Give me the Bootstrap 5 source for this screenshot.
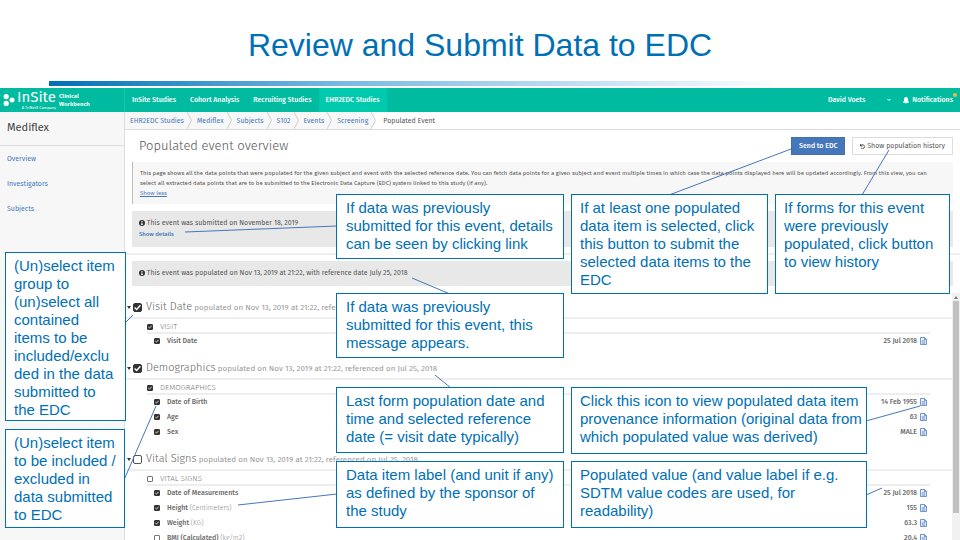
<!DOCTYPE html>
<html lang="en">
<head>
<meta charset="utf-8">
<meta name="viewport" content="width=device-width, initial-scale=1">
<title>Review and Submit Data to EDC</title>
<link href="https://cdn.jsdelivr.net/npm/bootstrap@5.3.0/dist/css/bootstrap.min.css" rel="stylesheet">
<style>
  :root { --ink: #0070b4; --link: #4677bb; --teal: #00bb9f; --rule: #eeeeee; }
  body { font-family: "Fira Sans", "Noto Sans", sans-serif; font-size: 7px; line-height: 10px; color: #555; background: #fff; }
  a { color: var(--link); text-decoration: none; }
  .slide { height: 100vh; }
  .slide-head { height: 88px; padding-top: 26px; }
  .slide-head h1 { font: 32px/38px "Liberation Sans", Arial, sans-serif; color: var(--ink); text-align: center; margin: 0 0 17px; }
  .fade-bar { height: 5px; margin-left: 49px; width: 77%; background: linear-gradient(90deg, #0070b4, #79bae4 40%, #c9e2f4 75%, #fff); }
  .topbar { height: 24px; background: var(--teal); color: #fff; font-weight: 500; }
  .topbar a, .topbar button { color: #fff; }
  .brand-cell { width: 125px; border-right: 1px solid #1fc4ab; padding-left: 3px; }
  .brand-words { margin: 0 3px 0 2px; }
  .brand-name { font-size: 15px; line-height: 15px; font-weight: 400; }
  .brand-sub { font-size: 4px; line-height: 5px; font-weight: 400; }
  .brand-tag { font-size: 6px; line-height: 8px; font-weight: 600; }
  .main-nav .nav-link { padding: 0 7px; line-height: 24px; }
  .main-nav .nav-link.active { background: #00caad; }
  .user-btn { background: none; border: 0; padding: 0; font-weight: 500; line-height: 24px; }
  .user-btn svg { margin-left: 22px; }
  .user-side { padding-right: 7px; }
  .bell { margin-right: 3px; }
  .alert-dot { width: 4px; height: 4px; border-radius: 50%; background: #ffb14a; top: -2px; right: -4px; }
  .side { width: 125px; background: #f7f7f7; border-right: 1px solid #ddd; }
  .side h2 { font-size: 11px; line-height: 32px; height: 34px; margin: 0; padding-left: 7px; border-bottom: 1px solid #ddd; color: #444; font-weight: 400; }
  .side .nav-link { padding: 0 7px; line-height: 25px; color: var(--link); }
  .crumbs { height: 18px; border-bottom: 1px solid #ddd; line-height: 17px; }
  .crumbs ol { margin: 0; padding: 0; list-style: none; }
  .crumbs li { background: #f7f7f7; padding-left: 5px; }
  .crumbs li:last-child { background: #fff; padding-left: 7px; }
  .crumbs svg { width: 5px; height: 17px; margin-left: 3px; display: block; }
  .page-title { height: 32px; padding: 0 7px 0 14px; }
  .page-title h3 { font-size: 13px; line-height: 20px; font-weight: 300; color: #555; margin: 0; }
  .act { font-size: 7px; line-height: 16px; border-radius: 0; padding: 0 7px; border: 1px solid #ddd; color: #555; background: #fff; }
  .act-main { background: var(--link); border-color: #426fae; color: #fff; font-weight: 500; margin-right: 7px; }
  .notes { padding: 0 7px; }
  .intro { background: #f7f7f7; border-left: 1px solid #bbb; padding: 6px 7px; height: 42px; font-size: 6px; }
  .notice { background: #e8e8e8; padding: 7px; }
  .notice svg { width: 6px; height: 6px; }
  .notice-sub { height: 36px; margin-top: 7px; }
  .notice-sub a { display: block; font-size: 6px; line-height: 12px; font-weight: 500; }
  .notice-pop { height: 25px; }
  .split { height: 2px; background: #eee; margin: 6px 0; }
  .forms { margin-top: 7px; }
  .group { margin-bottom: 10px; }
  .group-head { height: 22px; border-bottom: 2px solid var(--rule); padding-left: 2px; color: #999; font-size: 8px; }
  .group-head b { font-size: 11px; font-weight: 300; color: #666; }
  .caret-tri { border: 2px solid transparent; border-top: 3px solid #333; border-bottom: 0; margin-right: 2px; }
  .sub-block { margin-left: 22px; margin-right: 22px; }
  .sub-head { height: 15px; border-bottom: 2px solid var(--rule); padding-top: 2px; font-size: 8px; }
  .sub-head label { color: #777; font-weight: 300; margin-left: 7px; }
  .item { height: 14px; padding-left: 7px; padding-right: 3px; font-weight: 500; color: #6a6a6a; }
  .item + .item { height: 15px; }
  .item label { margin-left: 7px; }
  .item small { font-size: 7px; color: #888; font-weight: 300; }
  .item svg { width: 7px; height: 8px; margin-left: 3px; }
  input.tick { appearance: none; width: 6px; height: 6px; margin: 0; border: 1px solid #777; border-radius: 1px; background: #fff center/100% no-repeat; flex: none; }
  input.tick-lg { width: 9px; height: 9px; border-radius: 2px; margin-right: 4px; border-color: #555; }
  input.tick:checked { background-color: #333; border-color: #333; background-image: url("data:image/svg+xml,%3Csvg xmlns='http://www.w3.org/2000/svg' viewBox='0 0 8 8'%3E%3Cpath d='M.7 4l2.300 2.200 4.300-4.800' fill='none' stroke='%23fff' stroke-width='1.6'/%3E%3C/svg%3E"); }
  .scroller { width: 8px; background: #f1f1f1; }
  .scroller-arrow { height: 8px; }
  .scroller-thumb { height: 212px; width: 6px; background: #c1c1c1; }
  .callout { position: absolute; background: #fff; border: 1px solid var(--ink); color: var(--ink); font: 15px/18px "Liberation Sans", Arial, sans-serif; padding: 4px 9px; white-space: nowrap; margin: 0; }
  .callout-slim { padding: 4px 8px; }
  .leaders { position: absolute; left: 0; top: 0; width: 960px; height: 540px; fill: none; stroke: #4677bb; stroke-width: 1; pointer-events: none; }
</style>
<script src="https://cdn.jsdelivr.net/npm/bootstrap@5.3.0/dist/js/bootstrap.bundle.min.js"></script>
</head>
<body>
<svg class="d-none" aria-hidden="true">
  <symbol id="i-doc" viewBox="0 0 14 16"><path d="M1 1h8l4 4v10H1z M9 1v4h4" fill="#eaf1fa" stroke="#4677bb" stroke-width="1.5"/><path d="M3.5 7.5h7M3.5 10h7M3.5 12.5h7" stroke="#4677bb" stroke-width="1.2"/></symbol>
  <symbol id="i-info" viewBox="0 0 12 12"><circle cx="6" cy="6" r="6" fill="#333"/><path d="M5 2h2v2H5zM4.3 5H7v3.5h.8V10H4.300V8.500H5v-2h-.7z" fill="#fff"/></symbol>
  <symbol id="i-sep" viewBox="0 0 5 17"><path d="M0 0l4.500 8.500L0 17" fill="none" stroke="#ccc"/></symbol>
  <symbol id="i-sep-last" viewBox="0 0 5 17"><path d="M0 0l4.500 8.500L0 17H5V0z" fill="#fff"/><path d="M0 0l4.500 8.500L0 17" fill="none" stroke="#ccc"/></symbol>
</svg>
<div class="slide d-flex flex-column position-relative overflow-hidden">
  <header class="slide-head flex-shrink-0">
    <h1>Review and Submit Data to EDC</h1>
    <div class="fade-bar"></div>
  </header>

  <div class="topbar d-flex align-items-center flex-shrink-0">
    <a href="#" class="brand-cell d-flex align-items-center h-100 flex-shrink-0">
      <svg width="12" height="12" viewBox="0 0 12 12" fill="#fff" aria-hidden="true"><circle cx="3.200" cy="2.600" r="2.600"/><circle cx="9" cy="6" r="2.500"/><circle cx="3.200" cy="9.400" r="2.600"/></svg>
      <span class="brand-words d-flex flex-column text-end"><span class="brand-name">InSite</span><span class="brand-sub">A TriNetX Company</span></span>
      <span class="brand-tag">Clinical<br>Workbench</span>
    </a>
    <nav class="nav main-nav flex-nowrap">
      <a class="nav-link" href="#">InSite Studies</a>
      <a class="nav-link" href="#">Cohort Analysis</a>
      <a class="nav-link" href="#">Recruiting Studies</a>
      <a class="nav-link active" href="#">EHR2EDC Studies</a>
    </nav>
    <div class="user-side d-flex align-items-center ms-auto">
      <button type="button" class="user-btn d-flex align-items-center">David Voets
        <svg width="4" height="4" viewBox="0 0 8 8" fill="none" stroke="#fff" stroke-width="2" aria-hidden="true"><path d="M1 2l3 3 3-3"/></svg></button>
      <a href="#" class="position-relative d-flex align-items-center ms-2 ps-1"><svg class="bell" width="6" height="7" viewBox="0 0 12 14" fill="#fff" aria-hidden="true"><path d="M6 0c-3 0-4 2.500-4 5 0 3-.7 4-2 5.500V11.500h12V10.500C10.700 9 10 8 10 5c0-2.500-1-5-4-5zM4.300 12a1.800 1.800 0 0 0 3.400 0z"/></svg>Notifications<span class="alert-dot position-absolute"></span></a>
    </div>
  </div>

  <div class="d-flex flex-grow-1 overflow-hidden">
    <aside class="side flex-shrink-0">
      <h2>Mediflex</h2>
      <nav class="nav flex-column">
        <a class="nav-link" href="#">Overview</a>
        <a class="nav-link" href="#">Investigators</a>
        <a class="nav-link" href="#">Subjects</a>
      </nav>
    </aside>

    <main class="flex-grow-1 d-flex flex-column overflow-hidden">
      <nav class="crumbs flex-shrink-0" aria-label="breadcrumb">
        <ol class="d-flex">
          <li class="d-flex"><a href="#">EHR2EDC Studies</a><svg><use href="#i-sep"/></svg></li>
          <li class="d-flex"><a href="#">Mediflex</a><svg><use href="#i-sep"/></svg></li>
          <li class="d-flex"><a href="#">Subjects</a><svg><use href="#i-sep"/></svg></li>
          <li class="d-flex"><a href="#">S102</a><svg><use href="#i-sep"/></svg></li>
          <li class="d-flex"><a href="#">Events</a><svg><use href="#i-sep"/></svg></li>
          <li class="d-flex"><a href="#">Screening</a><svg><use href="#i-sep-last"/></svg></li>
          <li aria-current="page">Populated Event</li>
        </ol>
      </nav>
      <div class="page-title d-flex align-items-center flex-shrink-0">
        <h3>Populated event overview</h3>
        <button type="button" class="act act-main ms-auto">Send to EDC</button>
        <button type="button" class="act"><svg width="5" height="5" viewBox="0 0 10 10" fill="none" stroke="#444" stroke-width="1.800" aria-hidden="true"><path d="M1 0v4h4M1.500 3.500A4 4 0 1 1 2 8"/></svg> Show population history</button>
      </div>
      <section class="notes flex-shrink-0">
        <div class="intro">This page shows all the data points that were populated for the given subject and event with the selected reference date. You can fetch data points for a given subject and event multiple times in which case the data points displayed here will be updated accordingly. From this view, you can<br>select all extracted data points that are to be submitted to the Electronic Data Capture (EDC) system linked to this study (if any).<br><a href="#" class="text-decoration-underline">Show less</a></div>
        <div class="notice notice-sub"><svg><use href="#i-info"/></svg> This event was submitted on November 18, 2019<a href="#">Show details</a></div>
      </section>
      <div class="split flex-shrink-0"></div>
      <section class="notes flex-shrink-0">
        <div class="notice notice-pop"><svg><use href="#i-info"/></svg> This event was populated on Nov 13, 2019 at 21:22, with reference date July 25, 2018</div>
      </section>

      <div class="forms d-flex flex-grow-1 overflow-hidden">
        <div class="flex-grow-1 pt-1 overflow-hidden">
          <section class="group">
            <div class="group-head d-flex align-items-center"><span class="caret-tri"></span><input class="tick tick-lg" type="checkbox" id="g1" checked><label for="g1"><b>Visit Date</b> populated on Nov 13, 2019 at 21:22, referenced on Jul 25, 2018</label></div>
            <div class="sub-block">
              <div class="sub-head d-flex align-items-center"><input class="tick" type="checkbox" id="s1" checked><label for="s1">VISIT</label></div>
              <div class="item d-flex align-items-center"><input class="tick" type="checkbox" id="a1" checked><label for="a1">Visit Date</label><span class="ms-auto">25 Jul 2018</span><svg><use href="#i-doc"/></svg></div>
            </div>
          </section>
          <section class="group">
            <div class="group-head d-flex align-items-center"><span class="caret-tri"></span><input class="tick tick-lg" type="checkbox" id="g2" checked><label for="g2"><b>Demographics</b> populated on Nov 13, 2019 at 21:22, referenced on Jul 25, 2018</label></div>
            <div class="sub-block">
              <div class="sub-head d-flex align-items-center"><input class="tick" type="checkbox" id="s2" checked><label for="s2">DEMOGRAPHICS</label></div>
              <div class="item d-flex align-items-center"><input class="tick" type="checkbox" id="b1" checked><label for="b1">Date of Birth</label><span class="ms-auto">14 Feb 1955</span><svg><use href="#i-doc"/></svg></div>
              <div class="item d-flex align-items-center"><input class="tick" type="checkbox" id="b2" checked><label for="b2">Age</label><span class="ms-auto">63</span><svg><use href="#i-doc"/></svg></div>
              <div class="item d-flex align-items-center"><input class="tick" type="checkbox" id="b3" checked><label for="b3">Sex</label><span class="ms-auto">MALE</span><svg><use href="#i-doc"/></svg></div>
            </div>
          </section>
          <section class="group">
            <div class="group-head d-flex align-items-center"><span class="caret-tri"></span><input class="tick tick-lg" type="checkbox" id="g3"><label for="g3"><b>Vital Signs</b> populated on Nov 13, 2019 at 21:22, referenced on Jul 25, 2018</label></div>
            <div class="sub-block">
              <div class="sub-head d-flex align-items-center"><input class="tick" type="checkbox" id="s3"><label for="s3">VITAL SIGNS</label></div>
              <div class="item d-flex align-items-center"><input class="tick" type="checkbox" id="c1" checked><label for="c1">Date of Measurements</label><span class="ms-auto">25 Jul 2018</span><svg><use href="#i-doc"/></svg></div>
              <div class="item d-flex align-items-center"><input class="tick" type="checkbox" id="c2" checked><label for="c2">Height <small>(Centimeters)</small></label><span class="ms-auto">155</span><svg><use href="#i-doc"/></svg></div>
              <div class="item d-flex align-items-center"><input class="tick" type="checkbox" id="c3" checked><label for="c3">Weight <small>(KG)</small></label><span class="ms-auto">63.3</span><svg><use href="#i-doc"/></svg></div>
              <div class="item d-flex align-items-center"><input class="tick" type="checkbox" id="c4"><label for="c4">BMI (Calculated) <small>(kg/m2)</small></label><span class="ms-auto">20.4</span><svg><use href="#i-doc"/></svg></div>
            </div>
          </section>
        </div>
        <div class="scroller flex-shrink-0" aria-hidden="true">
          <div class="scroller-arrow d-flex justify-content-center align-items-center"><svg width="4" height="3" viewBox="0 0 4 3" fill="#777"><path d="M2 0l2 3H0z"/></svg></div>
          <div class="scroller-thumb mx-auto"></div>
        </div>
      </div>
    </main>
  </div>

  <svg class="leaders" viewBox="0 0 960 540" aria-hidden="true">
    <path d="M791 149L669 195M889 150L862 195M185 232L337 226M412 278L450 294M125 323L133 315M156 406L124 480M435 375L451 388M238 505L337 494M920 406L866 421M882 488L866 495"/>
  </svg>
  <p class="callout" style="left:336px;top:194px;width:228px;height:65px">If data was previously<br>submitted for this event, details<br>can be seen by clicking link</p>
  <p class="callout callout-slim" style="left:571px;top:194px;width:197px;height:100px">If at least one populated<br>data item is selected, click<br>this button to submit the<br>selected data items to the<br>EDC</p>
  <p class="callout callout-slim" style="left:775px;top:194px;width:175px;height:100px">If forms for this event<br>were previously<br>populated, click button<br>to view history</p>
  <p class="callout callout-slim" style="left:5px;top:252px;width:121px;height:169px">(Un)select item<br>group to<br>(un)select all<br>contained<br>items to be<br>included/exclu<br>ded in the data<br>submitted to<br>the EDC</p>
  <p class="callout callout-slim" style="left:5px;top:429px;width:120px;height:99px">(Un)select item<br>to be included /<br>excluded in<br>data submitted<br>to EDC</p>
  <p class="callout" style="left:336px;top:293px;width:228px;height:65px">If data was previously<br>submitted for this event, this<br>message appears.</p>
  <p class="callout" style="left:336px;top:387px;width:228px;height:66px">Last form population date and<br>time and selected reference<br>date (= visit date typically)</p>
  <p class="callout callout-slim" style="left:571px;top:387px;width:296px;height:67px">Click this icon to view populated data item<br>provenance information (original data from<br>which populated value was derived)</p>
  <p class="callout" style="left:336px;top:461px;width:228px;height:67px">Data item label (and unit if any)<br>as defined by the sponsor of<br>the study</p>
  <p class="callout callout-slim" style="left:571px;top:461px;width:296px;height:67px">Populated value (and value label if e.g.<br>SDTM value codes are used, for<br>readability)</p>
</div>
</body>
</html>
